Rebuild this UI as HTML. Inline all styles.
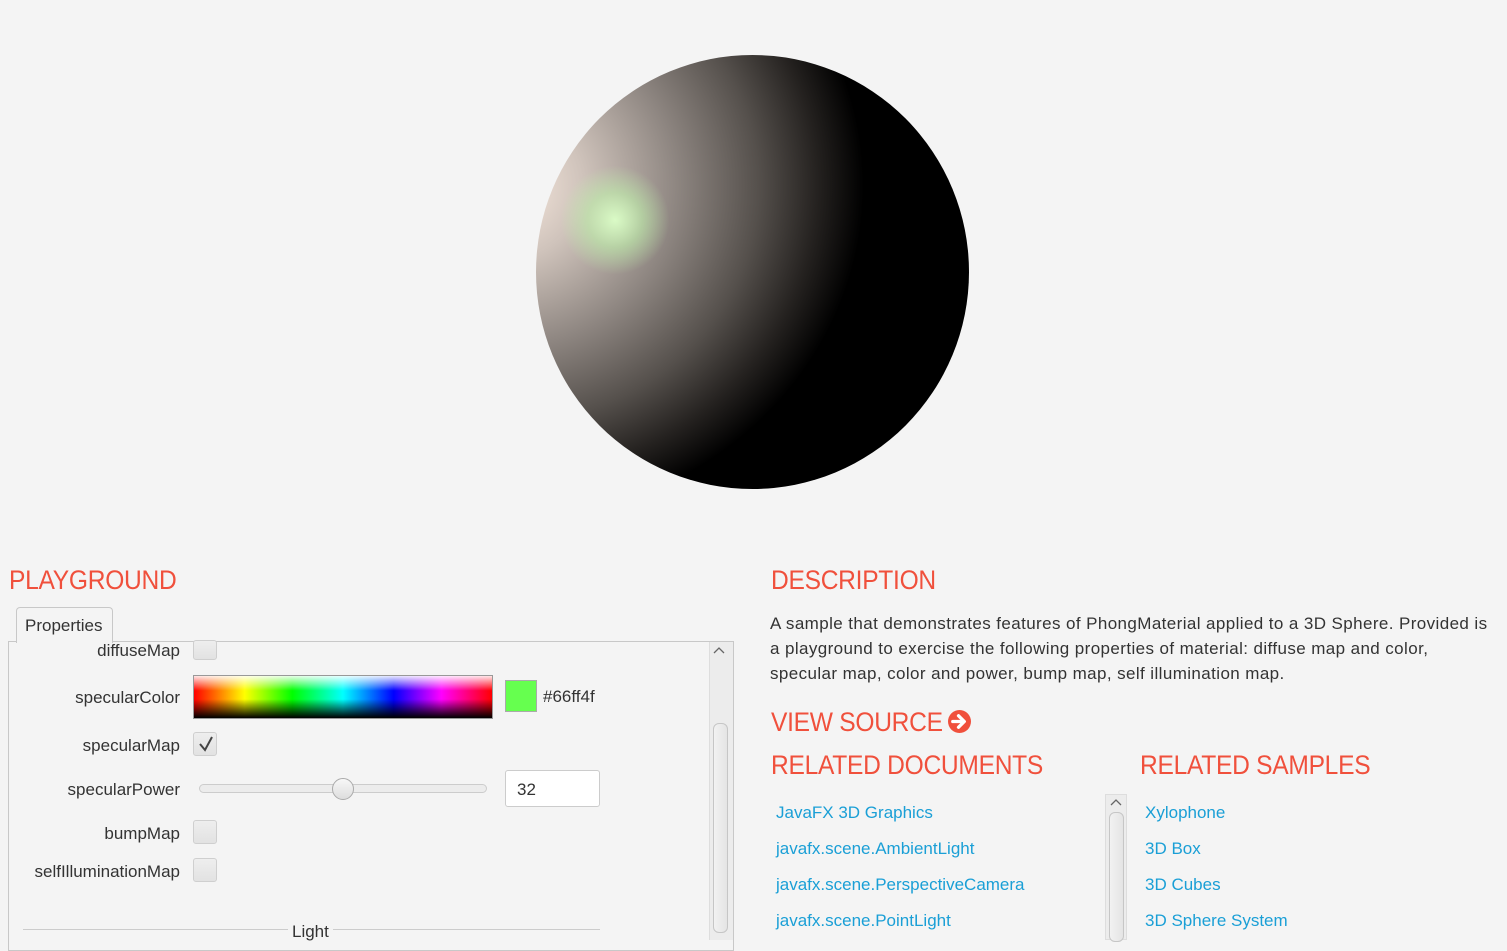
<!DOCTYPE html>
<html><head><meta charset="utf-8"><style>
*{margin:0;padding:0;box-sizing:border-box}
body{width:1507px;height:940px;background:#f4f4f4;font-family:"Liberation Sans",sans-serif;position:relative;overflow:hidden;color:#333}
.a{position:absolute;white-space:nowrap}
.h{color:#f0503c;font-size:27px;letter-spacing:-0.3px;font-weight:normal;transform-origin:0 0;transform:scaleX(.91)}
.lbl{font-size:17px;color:#333;text-align:right;width:170px;left:10px}
.cb{position:absolute;width:24px;height:24px;border:1px solid #cfcfcf;border-radius:3px;background:linear-gradient(#eee,#e2e2e2);left:193px}
.lnk{color:#1a9fd6;font-size:17px}
.d{font-size:17px;color:#333;letter-spacing:0.4px}
</style></head><body>
<div class="a" style="left:536px;top:55px;width:433px;height:434px;border-radius:50%;background:radial-gradient(ellipse 135% 125% at -8% 30%,#fdeee3 0%,#cfc3bb 14%,#8e8681 30%,#55504c 44%,#252220 54%,#000 62%)"></div>
<div class="a" style="left:560px;top:165px;width:110px;height:110px;border-radius:50%;background:radial-gradient(circle,rgba(220,255,200,.95) 0%,rgba(190,240,170,.6) 35%,rgba(190,240,170,0) 70%)"></div>

<div class="a h" style="left:9px;top:565px">PLAYGROUND</div>
<div class="a" style="left:16px;top:607px;width:97px;height:36px;border:1px solid #c8c8c8;border-bottom:none;border-radius:4px 4px 0 0;background:#f4f4f4;z-index:2"></div>
<div class="a" style="left:25px;top:616px;font-size:17px;z-index:3">Properties</div>
<div class="a" style="left:8px;top:641px;width:726px;height:310px;border:1px solid #c8c8c8;background:#f4f4f4"></div>
<div class="a" style="left:709px;top:642px;width:24px;height:298px;background:#ececec;border-left:1px solid #ddd"></div>
<div class="a" style="left:713px;top:723px;width:15px;height:210px;border:1px solid #c6c6c6;border-radius:6px;background:linear-gradient(90deg,#f2f2f2,#e4e4e4)"></div>
<svg class="a" style="left:713px;top:646px" width="12" height="8"><path d="M1 7L6 2L11 7" stroke="#666" fill="none" stroke-width="1.3"/></svg>

<div class="a lbl" style="top:641px">diffuseMap</div><div class="cb" style="top:640px;height:20px"></div>
<div class="a lbl" style="top:688px">specularColor</div>
<div class="a" style="left:193px;top:675px;width:300px;height:44px;border:1px solid #999;background:linear-gradient(rgba(255,255,255,.9),rgba(255,255,255,0) 35%,rgba(0,0,0,0) 55%,#000),linear-gradient(90deg,#f00,#ff0 17%,#0f0 33%,#0ff 50%,#00f 67%,#f0f 83%,#f00)"></div>
<div class="a" style="left:505px;top:680px;width:32px;height:32px;background:#66ff4f;border:1px solid #aaa"></div>
<div class="a" style="left:543px;top:687px;font-size:17px">#66ff4f</div>
<div class="a lbl" style="top:736px">specularMap</div><div class="cb" style="top:732px"><svg style="position:absolute;left:3px;top:2px" width="18" height="18"><path d="M3 9L8 15L15 2" stroke="#444" stroke-width="2" fill="none"/></svg></div>
<div class="a lbl" style="top:780px">specularPower</div>
<div class="a" style="left:199px;top:784px;width:288px;height:9px;border:1px solid #ccc;border-radius:5px;background:#ececec"></div>
<div class="a" style="left:332px;top:778px;width:22px;height:22px;border:1px solid #aaa;border-radius:50%;background:linear-gradient(#f8f8f8,#ddd)"></div>
<div class="a" style="left:505px;top:770px;width:95px;height:37px;border:1px solid #ccc;border-radius:3px;background:#fff"></div>
<div class="a" style="left:517px;top:780px;font-size:17px">32</div>
<div class="a lbl" style="top:824px">bumpMap</div><div class="cb" style="top:820px"></div>
<div class="a lbl" style="top:862px">selfIlluminationMap</div><div class="cb" style="top:858px"></div>
<div class="a" style="left:23px;top:929px;width:577px;height:1px;background:#ccc"></div>
<div class="a" style="left:288px;top:922px;font-size:17px;background:#f4f4f4;padding:0 4px">Light</div>

<div class="a h" style="left:771px;top:565px">DESCRIPTION</div>
<div class="a d" style="left:770px;top:614px">A sample that demonstrates features of PhongMaterial applied to a 3D Sphere. Provided is</div>
<div class="a d" style="left:770px;top:639px">a playground to exercise the following properties of material: diffuse map and color,</div>
<div class="a d" style="left:770px;top:664px">specular map, color and power, bump map, self illumination map.</div>
<div class="a h" style="left:771px;top:707px">VIEW SOURCE</div>
<svg class="a" style="left:948px;top:710px" width="23" height="23" viewBox="0 0 24 24"><circle cx="12" cy="12" r="12" fill="#f0503c"/><path d="M5 12h11M11 6l6 6-6 6" stroke="#fff" stroke-width="3.5" fill="none" stroke-linecap="round" stroke-linejoin="round"/></svg>
<div class="a h" style="left:771px;top:750px">RELATED DOCUMENTS</div>
<div class="a h" style="left:1140px;top:750px">RELATED SAMPLES</div>
<div class="a lnk" style="left:776px;top:803px">JavaFX 3D Graphics</div>
<div class="a lnk" style="left:776px;top:839px">javafx.scene.AmbientLight</div>
<div class="a lnk" style="left:776px;top:875px">javafx.scene.PerspectiveCamera</div>
<div class="a lnk" style="left:776px;top:911px">javafx.scene.PointLight</div>
<div class="a" style="left:1105px;top:794px;width:22px;height:146px;background:#ececec;border:1px solid #ddd"></div>
<div class="a" style="left:1109px;top:812px;width:15px;height:130px;border:1px solid #c6c6c6;border-radius:6px;background:linear-gradient(90deg,#f2f2f2,#e4e4e4)"></div>
<svg class="a" style="left:1110px;top:798px" width="12" height="8"><path d="M1 7L6 2L11 7" stroke="#666" fill="none" stroke-width="1.3"/></svg>
<div class="a lnk" style="left:1145px;top:803px">Xylophone</div>
<div class="a lnk" style="left:1145px;top:839px">3D Box</div>
<div class="a lnk" style="left:1145px;top:875px">3D Cubes</div>
<div class="a lnk" style="left:1145px;top:911px">3D Sphere System</div>
</body></html>
